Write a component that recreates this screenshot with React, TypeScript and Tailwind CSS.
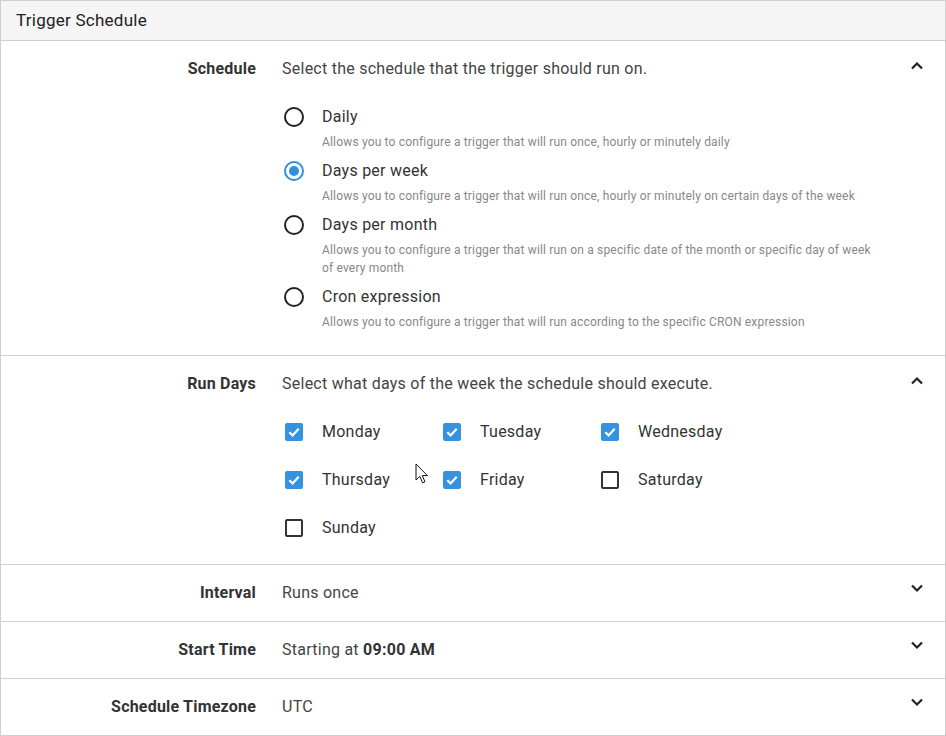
import React from "react";

const options = [
  {
    label: "Daily",
    desc: "Allows you to configure a trigger that will run once, hourly or minutely daily",
  },
  {
    label: "Days per week",
    desc: "Allows you to configure a trigger that will run once, hourly or minutely on certain days of the week",
  },
  {
    label: "Days per month",
    desc: "Allows you to configure a trigger that will run on a specific date of the month or specific day of week of every month",
  },
  {
    label: "Cron expression",
    desc: "Allows you to configure a trigger that will run according to the specific CRON expression",
  },
];

const days = [
  { name: "Monday", on: true },
  { name: "Tuesday", on: true },
  { name: "Wednesday", on: true },
  { name: "Thursday", on: true },
  { name: "Friday", on: true },
  { name: "Saturday", on: false },
  { name: "Sunday", on: false },
];

function Chevron({ up }: { up?: boolean }) {
  return (
    <svg width="14" height="9" viewBox="0 0 14 9" className={up ? "mt-[4px]" : "mt-[3px]"}>
      <path
        d={up ? "M2 7.5 L7 2.5 L12 7.5" : "M2 1.5 L7 6.5 L12 1.5"}
        fill="none"
        stroke="#222"
        strokeWidth="2.2"
      />
    </svg>
  );
}

function Radio({ checked }: { checked?: boolean }) {
  return (
    <div className="w-6 h-6 flex items-center justify-center">
      <div
        className={
          checked
            ? "w-5 h-5 rounded-full border-2 border-[#2f8fe0] flex items-center justify-center"
            : "w-5 h-5 rounded-full border-2 border-[#222]"
        }
      >
        {checked && <div className="w-[10px] h-[10px] rounded-full bg-[#2f8fe0]" />}
      </div>
    </div>
  );
}

function Checkbox({ checked }: { checked?: boolean }) {
  return (
    <div className="w-6 h-6 flex items-center justify-center">
      {checked ? (
        <div className="w-[18px] h-[18px] rounded-[2px] bg-[#3592de] flex items-center justify-center">
          <svg width="14" height="14" viewBox="0 0 14 14">
            <path d="M2.3 7.2 L5.6 10.4 L11.7 3.8" fill="none" stroke="#fff" strokeWidth="2.2" />
          </svg>
        </div>
      ) : (
        <div className="w-[18px] h-[18px] rounded-[2px] border-2 border-[#333]" />
      )}
    </div>
  );
}

function Row({
  label,
  open,
  children,
  pb = "pb-4",
}: {
  label: string;
  open?: boolean;
  children: React.ReactNode;
  pb?: string;
}) {
  return (
    <div className={`flex border-b border-[#cfcfcf] pt-4 ${pb}`}>
      <div className="w-[255px] text-right font-bold text-[#333] leading-6 tracking-[0.2px] shrink-0">
        {label}
      </div>
      <div className="flex-1 pl-[26px] text-[#444] leading-6 tracking-[0.25px]">{children}</div>
      <div className="w-[56px] flex justify-center shrink-0">
        <Chevron up={open} />
      </div>
    </div>
  );
}

export default function App() {
  return (
    <div className="w-[946px] h-[736px] bg-white font-['Roboto',sans-serif] text-[16px] relative">
      <div className="border border-[#cfcfcf]">
        <div className="h-10 bg-[#f5f5f5] border-b border-[#cfcfcf] px-[15px] flex items-center text-[#222] text-[17px] tracking-[0.25px]">
          Trigger Schedule
        </div>

        <Row label="Schedule" open pb="pb-6">
          <div>Select the schedule that the trigger should run on.</div>
          <div className="mt-6 flex flex-col gap-2">
            {options.map((o, i) => (
              <div key={o.label} className="flex">
                <Radio checked={i === 1} />
                <div className="pl-4">
                  <div className="text-[#333]">{o.label}</div>
                  <div className="mt-1 text-[12px] leading-[18px] text-[#888] tracking-[0.17px] max-w-[556px]">
                    {o.desc}
                  </div>
                </div>
              </div>
            ))}
          </div>
        </Row>

        <Row label="Run Days" open pb="pb-6">
          <div>Select what days of the week the schedule should execute.</div>
          <div className="mt-6 grid grid-cols-[158px_158px_158px] gap-y-6">
            {days.map((d) => (
              <div key={d.name} className="flex items-center">
                <Checkbox checked={d.on} />
                <span className="pl-4 text-[#333]">{d.name}</span>
              </div>
            ))}
          </div>
        </Row>

        <Row label="Interval">Runs once</Row>
        <Row label="Start Time">
          Starting at <span className="font-bold text-[#333]">09:00 AM</span>
        </Row>
        <Row label="Schedule Timezone">UTC</Row>
      </div>

      <svg
        className="absolute left-[415px] top-[463px]"
        width="14"
        height="22"
        viewBox="0 0 14 22"
      >
        <path
          d="M1 1 L1 17 L4.8 13.4 L7.6 19.8 L10 18.8 L7.3 12.6 L12.4 12.6 Z"
          fill="#fff"
          stroke="#111"
          strokeWidth="1"
          strokeLinejoin="round"
        />
      </svg>
    </div>
  );
}
